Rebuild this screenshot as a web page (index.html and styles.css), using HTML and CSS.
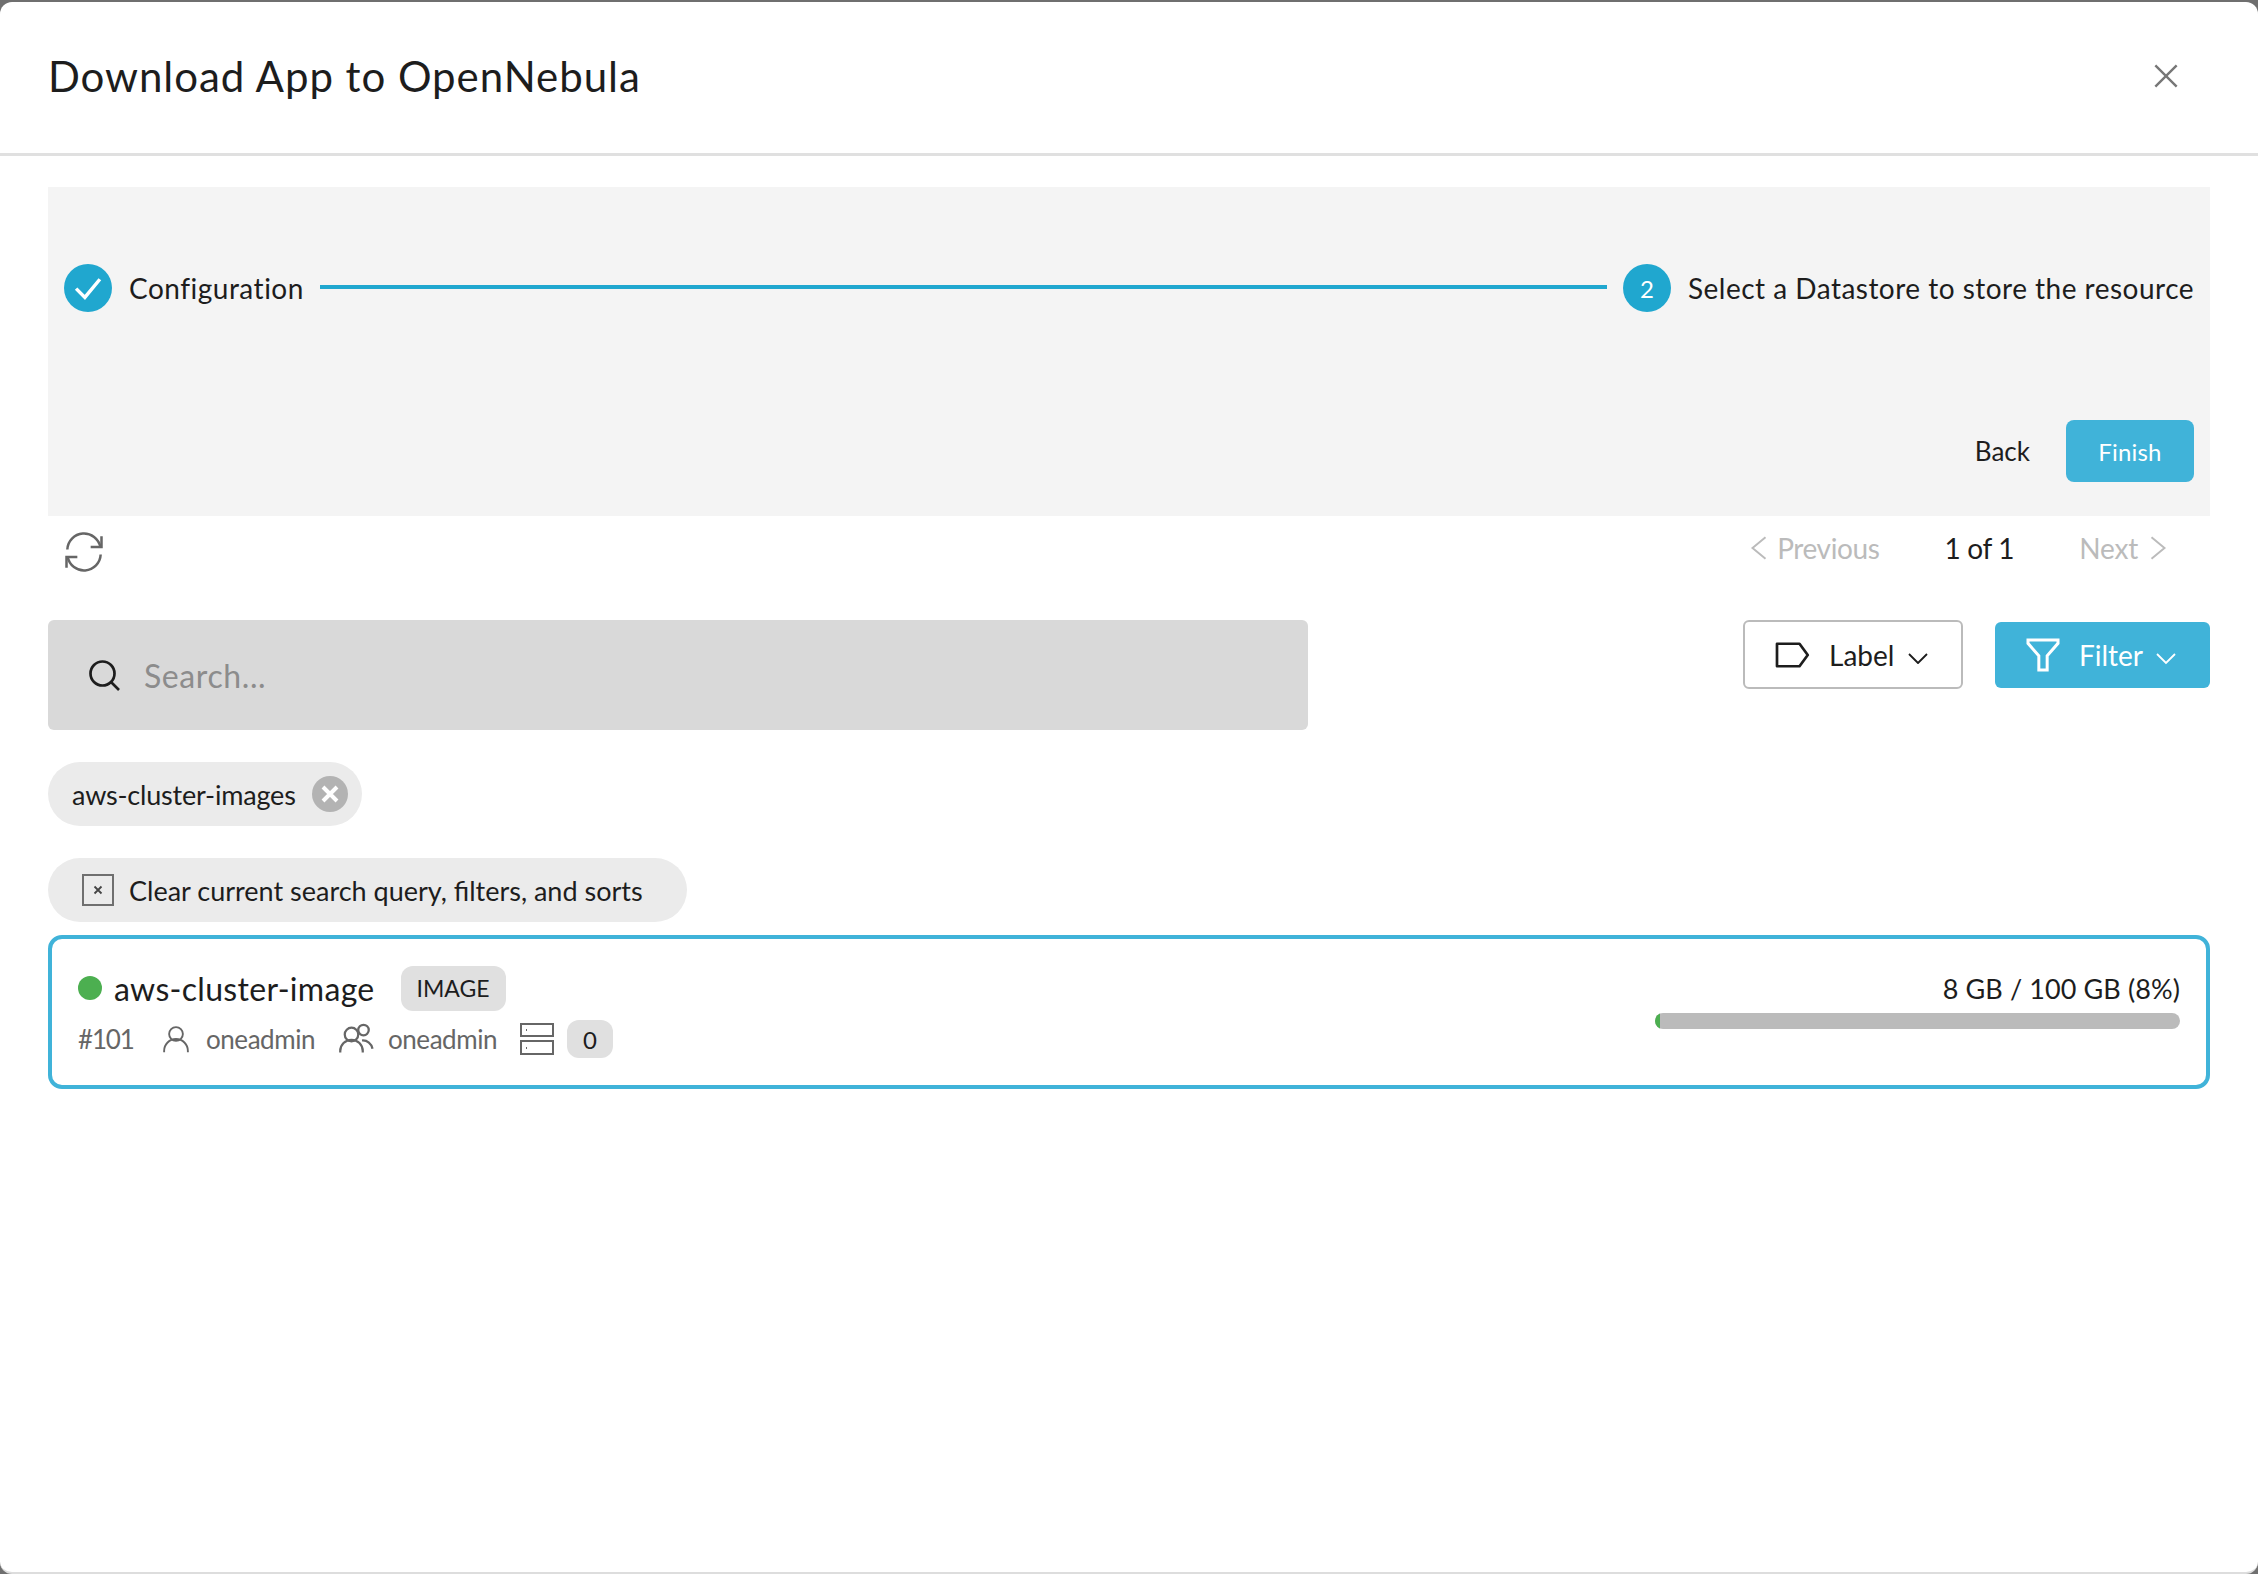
FILE: index.html
```html
<!doctype html>
<html lang="en">
<head>
	<meta charset="UTF-8"/>
	<title>Download App to OpenNebula</title>
	<link rel="stylesheet" href="styles.css">
</head>
<body>
	<div class="modal">
		<div class="modalHead">
			<h2 class="modalTitle">Download App to OpenNebula</h2>
			<a href="#" class="closeBt">
				<svg class="ico24 closeIco" width="32" height="32" viewBox="0 0 24 24"><path d="M4 4l16 16M20 4L4 20"/></svg>
			</a>
		</div>
		<div class="modalBody">
			<div class="stepBox">
				<div class="stepper">
					<span class="stepNum">
						<svg width="30" height="30" viewBox="0 0 24 24"><path class="checkPath" d="M2.500 12.500l7 7L21.500 5"/></svg>
					</span>
					<span class="stepTxt txtConfig">Configuration</span>
					<span class="stepLine"></span>
					<span class="stepNum">2</span>
					<span class="stepTxt txtSelect">Select a Datastore to store the resource</span>
				</div>
				<div class="stepActions">
					<a href="#" class="backBt">Back</a>
					<a href="#" class="finishBt">Finish</a>
				</div>
			</div>

			<div class="pageRow">
				<a href="#" class="refreshBt">
					<svg class="ico24 grayIco" width="40" height="40" viewBox="0 0 24 24">
						<path d="M21.800 9A10 10 0 0 0 2 10.500"/>
						<path d="M22.500 2.500V9h-6.500"/>
						<path d="M2.200 15a10 10 0 0 0 19.800-1.500"/>
						<path d="M1.500 21.500V15H8"/>
					</svg>
				</a>
				<div class="pager">
					<span class="pageOff">
						<svg class="ico24 offIco" width="26" height="26" viewBox="0 0 24 24"><path d="M18 2L6 12l12 10"/></svg>
						<span class="txtPrev">Previous</span>
					</span>
					<span class="pageNow">1 of 1</span>
					<span class="pageOff">
						<span class="txtNext">Next</span>
						<svg class="ico24 offIco" width="26" height="26" viewBox="0 0 24 24"><path d="M6 2l12 10L6 22"/></svg>
					</span>
				</div>
			</div>

			<div class="toolRow">
				<div class="searchBox">
					<svg class="ico24 darkIco" width="36" height="36" viewBox="0 0 24 24">
						<circle cx="11" cy="11" r="8"/>
						<path d="M17 17l5 5"/>
					</svg>
					<span class="searchTxt">Search...</span>
				</div>
				<div class="toolBts">
					<a href="#" class="labelBt">
						<svg class="ico24 darkIco" width="36" height="36" viewBox="0 0 24 24"><path d="M2 4.500h15l5.500 7.500-5.500 7.500H2z"/></svg>
						<span class="txtLabel">Label</span>
						<svg class="ico24 darkIco chevIco" width="24" height="24" viewBox="0 0 24 24"><path d="M3 8l9 9 9-9"/></svg>
					</a>
					<a href="#" class="filterBt">
						<svg class="ico24 whiteIco" width="40" height="40" viewBox="0 0 24 24"><path d="M3 3h18v2l-6.500 7.500V21h-5v-8.500L3 5z"/></svg>
						<span class="txtFilter">Filter</span>
						<svg class="ico24 whiteIco chevIco" width="24" height="24" viewBox="0 0 24 24"><path d="M3 8l9 9 9-9"/></svg>
					</a>
				</div>
			</div>

			<div class="chipRow">
				<span class="chip">
					<span class="txtChip">aws-cluster-images</span>
					<svg class="chipDel" width="36" height="36" viewBox="0 0 36 36">
						<circle cx="18" cy="18" r="18"/>
						<path d="M11 11l14 14M25 11L11 25"/>
					</svg>
				</span>
			</div>
			<div class="chipRow">
				<span class="chip clearChip">
					<svg class="clearIco" width="32" height="32" viewBox="0 0 32 32">
						<rect x="1" y="1" width="30" height="30"/>
						<path d="M12.500 12.500l7 7M19.500 12.500l-7 7"/>
					</svg>
					<span class="txtClear">Clear current search query, filters, and sorts</span>
				</span>
			</div>

			<div class="card">
				<div class="cardLeft">
					<div class="cardTop">
						<span class="dot"></span>
						<span class="cardName">aws-cluster-image</span>
						<span class="badge">IMAGE</span>
					</div>
					<div class="cardInfo">
						<span class="txtId">#101</span>
						<svg class="ico24 grayIco userIco" width="30" height="30" viewBox="0 0 24 24">
							<circle cx="12" cy="8" r="5.500"/>
							<path d="M2.500 22.500v-1a9.500 9.500 0 0 1 19 0v1"/>
						</svg>
						<span class="txtOwner">oneadmin</span>
						<svg class="ico24 grayIco groupIco" width="36" height="36" viewBox="0 0 24 24">
							<circle cx="9" cy="9" r="4.500"/>
							<path d="M1.500 21v-1a7.500 7.500 0 0 1 15 0v1"/>
							<circle cx="17" cy="6" r="3.500"/>
							<path d="M16 13a6.500 6.500 0 0 1 7 5.500"/>
						</svg>
						<span class="txtOwner">oneadmin</span>
						<svg class="ico24 grayIco serverIco" width="34" height="34" viewBox="0 0 34 34">
							<rect x="1" y="2" width="32" height="12"/>
							<rect x="1" y="19" width="32" height="13"/>
							<path d="M6 8h1M6 26h1"/>
						</svg>
						<span class="countBadge">0</span>
					</div>
				</div>
				<div class="cardRight">
					<span class="usageTxt">8 GB / 100 GB (8%)</span>
					<div class="usageBar"><span class="usageFill"></span></div>
				</div>
			</div>
		</div>
	</div>
</body>
</html>
```

FILE: styles.css
```css
*				{ padding:0; margin:0; box-sizing:border-box; }
a				{ text-decoration:none; color:inherit; }
html, body		{ height:100%; }
body			{ background:#6f6f6f; padding-top:2px; font-family:"Lato","Noto Sans",sans-serif; color:#1d1d1d; font-size:28px; overflow:hidden; }

svg				{ display:block; flex:none; }
.ico24			{ fill:none; stroke:#6f6f6f; stroke-width:1.500; }
.grayIco		{ stroke:#666; }
.offIco			{ stroke:#bbb; stroke-width:1.800; }
.darkIco		{ stroke:#1d1d1d; stroke-width:1.800; stroke-linejoin:round; }
.whiteIco		{ stroke:#fff; stroke-width:1.800; }
.closeIco		{ stroke:#777; stroke-width:1.800; }
.chevIco		{ margin-top:6px; }

.modal			{ height:1572px; background:#fff; border-radius:12px; border-bottom:2px solid #ddd; }
.modalHead		{ height:154px; border-bottom:3px solid #e0e0e0; padding:0 76px 3px 48px; display:flex; align-items:center; justify-content:space-between; }
.modalTitle		{ font-size:42px; font-weight:400; letter-spacing:0.95px; }
.closeBt		{ display:block; }

.modalBody		{ padding:31px 48px 0 48px; }

.stepBox		{ background:#f4f4f4; height:329px; padding:77px 16px 34px; display:flex; flex-direction:column; justify-content:space-between; }
.stepper		{ display:flex; align-items:center; height:48px; }
.stepNum		{ width:48px; height:48px; border-radius:50%; background:#20a7cf; color:#fff; font-size:24px; display:flex; align-items:center; justify-content:center; flex:none; }
.checkPath		{ fill:none; stroke:#fff; stroke-width:2.800; }
.stepTxt		{ margin-left:17px; white-space:nowrap; }
.txtConfig		{ letter-spacing:0.5px; }
.txtSelect		{ letter-spacing:0.48px; }
.stepLine		{ flex:1; height:4px; background:#20a7cf; margin:-2px 16px 0; }

.stepActions	{ display:flex; align-items:center; justify-content:flex-end; gap:36px; }
.backBt			{ font-size:26px; }
.finishBt		{ width:128px; height:62px; border-radius:8px; background:#40b3d9; color:#fff; display:flex; align-items:center; justify-content:center; font-size:24px; letter-spacing:0.2px; }

.pageRow		{ display:flex; justify-content:space-between; height:104px; padding:0 39px 0 16px; }
.refreshBt		{ display:block; margin-top:16px; height:40px; }
.pager			{ display:flex; align-items:flex-start; padding-top:15px; gap:65px; }
.pageOff		{ display:flex; align-items:center; color:#bbb; gap:7px; }
.txtPrev		{ letter-spacing:-0.4px; margin-left:-2px; }
.pageNow		{ letter-spacing:-0.3px; }
.txtNext		{ letter-spacing:-0.2px; }

.toolRow		{ display:flex; justify-content:space-between; height:110px; }
.searchBox		{ width:1260px; height:110px; background:#d9d9d9; border-radius:6px; display:flex; align-items:center; padding-left:38px; gap:22px; }
.searchTxt		{ font-size:32px; color:#8c8c8c; letter-spacing:0.6px; }
.toolBts		{ display:flex; align-items:flex-start; gap:32px; }
.labelBt		{ width:220px; height:69px; border:2px solid #bbb; border-radius:6px; display:flex; align-items:center; padding-left:29px; }
.txtLabel		{ margin:0 12px 0 19px; }
.filterBt		{ width:215px; height:66px; margin-top:2px; background:#40b3d9; border-radius:6px; color:#fff; display:flex; align-items:center; padding-left:28px; }
.txtFilter		{ margin:0 11px 0 16px; }

.chipRow		{ margin-top:32px; display:flex; }
.chip			{ height:64px; border-radius:32px; background:#ebebeb; display:flex; align-items:center; padding:0 14px 0 24px; }
.txtChip		{ font-size:27px; letter-spacing:-0.2px; margin-right:16px; }
.chipDel		{ fill:#b3b3b3; }
.chipDel path	{ fill:none; stroke:#fff; stroke-width:4; }
.clearChip		{ padding:0 44px 0 34px; }
.clearIco		{ margin-right:15px; }
.clearIco rect	{ fill:none; stroke:#6f6f6f; stroke-width:2; }
.clearIco path	{ fill:none; stroke:#444; stroke-width:1.800; }
.txtClear		{ font-size:27px; }

.card			{ margin-top:13px; height:154px; border:4px solid #40b3d9; border-radius:14px; display:flex; justify-content:space-between; padding:26px 26px 0 26px; }
.cardTop		{ display:flex; align-items:center; height:46px; }
.dot			{ width:24px; height:24px; border-radius:50%; background:#4caf50; margin-right:12px; }
.cardName		{ font-size:32px; letter-spacing:0.3px; }
.badge			{ margin-left:26px; width:105px; height:45px; background:#e0e0e0; border-radius:12px; font-size:23px; display:flex; align-items:center; justify-content:center; }
.cardInfo		{ display:flex; align-items:center; height:38px; margin-top:9px; color:#666; font-size:26px; }
.txtId			{ width:83px; letter-spacing:-1.200px; }
.userIco		{ margin-right:15px; }
.txtOwner		{ width:107px; letter-spacing:-0.45px; }
.groupIco		{ margin:0 14px 0 25px; }
.serverIco		{ margin:0 13px 0 25px; stroke-width:2; }
.countBadge		{ width:46px; height:38px; background:#e0e0e0; border-radius:12px; color:#1d1d1d; font-size:24px; display:flex; align-items:center; justify-content:center; }

.cardRight		{ width:525px; display:flex; flex-direction:column; align-items:flex-end; }
.usageTxt		{ height:46px; display:flex; align-items:center; font-size:27px; letter-spacing:0.1px; }
.usageBar		{ width:100%; height:16px; margin-top:2px; border-radius:8px; background:#bbb; overflow:hidden; }
.usageFill		{ display:block; width:5px; height:100%; background:#4caf50; }
```
